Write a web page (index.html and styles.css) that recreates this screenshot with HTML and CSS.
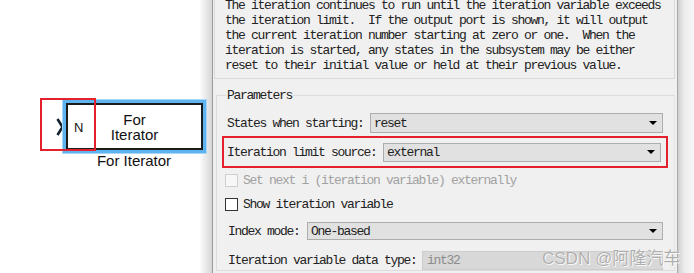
FILE: index.html
```html
<!DOCTYPE html>
<html lang="en">
  <head>
    <meta charset="UTF-8" />
    <meta name="viewport" content="width=device-width, initial-scale=1.0" />
    <title>For Iterator Block Parameters</title>
    <link rel="stylesheet" href="styles.css">
  </head>
  <body>
    <div class="screen">
      <div class="canvas">
        <svg class="port" width="10" height="20" viewBox="0 0 10 20">
          <polyline points="2.5,2 7.5,10 2.5,18" fill="none" stroke="#13202e" stroke-width="2.6" />
        </svg>
        <div class="block">
          <span class="port-label">N</span>
          <span class="block-title">For<br />Iterator</span>
        </div>
        <div class="block-name">For Iterator</div>
        <div class="mark mark-port"></div>
      </div>
      <div class="shade shade-left"></div>
      <div class="dialog">
        <div class="description">The iteration continues to run until the iteration variable exceeds
the iteration limit.  If the output port is shown, it will output
the current iteration number starting at zero or one.  When the
iteration is started, any states in the subsystem may be either
reset to their initial value or held at their previous value.</div>
        <fieldset class="params">
          <legend>Parameters</legend>
          <div class="row row-states">
            <label>States when starting:</label>
            <div class="select"><span>reset</span><i class="arrow"></i></div>
          </div>
          <div class="row row-limit">
            <label>Iteration limit source:</label>
            <div class="select"><span>external</span><i class="arrow"></i></div>
          </div>
          <div class="row row-check disabled">
            <span class="check"></span>
            <label>Set next i (iteration variable) externally</label>
          </div>
          <div class="row row-check row-show">
            <span class="check"></span>
            <label>Show iteration variable</label>
          </div>
          <div class="row row-index">
            <label>Index mode:</label>
            <div class="select"><span>One-based</span><i class="arrow"></i></div>
          </div>
          <div class="row row-type">
            <label>Iteration variable data type:</label>
            <div class="field">int32</div>
          </div>
        </fieldset>
      </div>
      <div class="shade shade-right"></div>
    </div>
    <div class="watermark">CSDN @阿隆汽车</div>
  </body>
</html>
```

FILE: styles.css
```css
* {
  box-sizing: border-box;
}
body {
  margin: 0;
  background: #fff;
  position: relative;
  overflow: hidden;
}
.screen {
  display: flex;
  height: 273px;
  overflow: hidden;
}

/* model canvas */
.canvas {
  width: 200px;
  flex: none;
  position: relative;
  background: #fff;
  font-family: "Liberation Sans", Arial, sans-serif;
  color: #111;
}
.port {
  position: absolute;
  left: 55px;
  top: 117px;
}
.block {
  position: absolute;
  left: 66px;
  top: 103px;
  width: 137px;
  height: 47px;
  border: 2px solid #1b1b1b;
  background: #fff;
  box-shadow: 0 0 0 3px #5db4ee, 0 0 0 4px #a9d6f6;
  display: flex;
  align-items: center;
  justify-content: center;
}
.port-label {
  position: absolute;
  left: 6px;
  top: 15px;
  font-size: 13px;
}
.block-title {
  font-size: 15px;
  line-height: 15px;
  text-align: center;
  margin-top: 1px;
}
.block-name {
  position: absolute;
  left: 84px;
  width: 100px;
  top: 152px;
  text-align: center;
  font-size: 15px;
}
.mark {
  position: absolute;
  border: 2px solid #e3202c;
}
.mark-port {
  left: 40px;
  top: 98px;
  width: 56px;
  height: 53px;
}

/* window shadows */
.shade {
  flex: none;
}
.shade-left {
  width: 12px;
  background: linear-gradient(to right, #fcfcfc, #d6d6d6);
}
.shade-right {
  flex: 1;
  background: linear-gradient(to right, #cfcfcf, #ececec 40%, #f7f7f7);
}

/* dialog */
.dialog {
  width: 466px;
  flex: none;
  background: #f0f0f0;
  border-left: 1px solid #9a9a9a;
  border-right: 1px solid #a8a8a8;
  font-family: "Liberation Mono", "Courier New", monospace;
  font-size: 13px;
  letter-spacing: -1.3px;
  color: #222;
}
.description {
  margin: -2px 2px 0 1px;
  padding: 0 0 5px 10px;
  border: 1px solid #dadada;
  border-top: none;
  line-height: 15px;
  white-space: pre;
}
.params {
  margin: 9px 2px 0 3px;
  padding: 0 11px 0 10px;
  border: 1px solid #dcdcdc;
  border-right-color: #e4e4e4;
  min-width: 0;
}
.params legend {
  padding: 0 1px;
  margin-left: -1px;
  line-height: 15px;
}
.row {
  display: flex;
  align-items: center;
}
.row label {
  white-space: pre;
  flex: none;
}
.row-states {
  margin-top: 10px;
  height: 20px;
}
.row-states label {
  width: 143px;
}
.row-limit {
  height: 32px;
  margin: 3px -5px 0 -5px;
  padding: 0 3px;
  border: 2px solid #e3202c;
}
.row-limit label {
  width: 156px;
}
.select {
  flex: 1;
  height: 20px;
  background: #e1e1e1;
  border: 1px solid #adadad;
  display: flex;
  align-items: center;
  padding-left: 3px;
  color: #1e1e1e;
}
.row-limit .select {
  height: 19px;
  margin-right: 2px;
}
.select span {
  flex: 1;
}
.arrow {
  width: 0;
  height: 0;
  border-left: 4px solid transparent;
  border-right: 4px solid transparent;
  border-top: 4px solid #000;
  margin-right: 5px;
}
.row-check {
  height: 16px;
  margin-top: 4px;
}
.row-show {
  margin-top: 8px;
}
.check {
  width: 13px;
  height: 13px;
  margin: 0 5px 0 -2px;
  border: 1px solid #333;
  background: #fff;
  flex: none;
}
.disabled {
  color: #a2a2a2;
}
.disabled .check {
  border-color: #cfcfcf;
  background: #f7f7f7;
}
.row-index {
  margin-top: 10px;
  height: 18px;
}
.row-index label {
  width: 79px;
  margin-left: 1px;
}
.row-index .select {
  height: 18px;
}
.row-type {
  margin-top: 11px;
  height: 19px;
}
.row-type label {
  width: 194px;
  margin-left: 1px;
}
.field {
  flex: 1;
  height: 19px;
  background: #d8d8d8;
  border: 1px solid #cdcdcd;
  padding-left: 4px;
  line-height: 17px;
  color: #8c8c8c;
}

/* overlay */
.watermark {
  position: absolute;
  left: 542px;
  top: 244px;
  font-family: "Liberation Sans", "Noto Sans CJK SC", sans-serif;
  font-size: 17px;
  color: rgba(160, 160, 160, 0.85);
  text-shadow: 0 0 1px #fff, 1px 1px 0 rgba(255, 255, 255, 0.8);
  white-space: nowrap;
}
```
